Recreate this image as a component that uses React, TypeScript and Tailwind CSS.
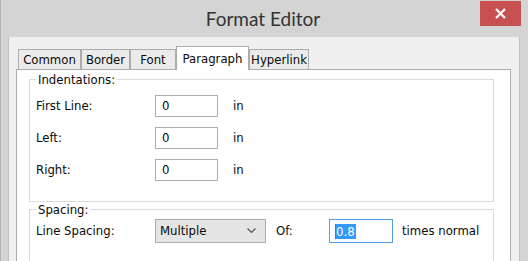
const tabs = [
  { name: "Common", w: "w-[63px]" },
  { name: "Border", w: "w-[49px]" },
  { name: "Font", w: "w-[46px]" },
  { name: "Paragraph", w: "w-[73px]", active: true },
  { name: "Hyperlink", w: "w-[60px]" },
];

const indents = ["First Line:", "Left:", "Right:"];

const Field = ({ value }: { value: string }) => (
  <div className="flex h-[22px] w-[63px] items-center border border-[#abadb3] bg-white pl-[6px]">
    {value}
  </div>
);

const App = () => {
  return (
    <div className="flex h-[261px] w-[528px] flex-col overflow-hidden border-l border-[#b4b4b4] bg-[#d4d4d4] font-['DejaVu_Sans',sans-serif] text-[13px] font-stretch-condensed text-[#0a0a0a]">
      <div className="grid h-[37px] shrink-0 grid-cols-[1fr_auto_1fr]">
        <div />
        <div className="pt-[5px] pr-[3px] font-['Lato',sans-serif] text-[19px] text-[#333] font-stretch-normal">
          Format Editor
        </div>
        <div className="flex justify-end pt-[1px] pr-[7px]">
          <div className="flex h-[25px] w-[41px] items-center justify-center bg-[#c75050]">
            <svg width="11" height="11" viewBox="0 0 11 11">
              <path d="M1 1 L10 10 M10 1 L1 10" stroke="#fff" strokeWidth="2.2" />
            </svg>
          </div>
        </div>
      </div>

      <div className="mr-[8px] ml-[7px] flex flex-1 flex-col border-x border-[#c2c2c2] bg-[#f0f0f0] pt-[9px] pr-[8px] pl-[7px]">
        <div className="flex items-end pl-[2px]">
          {tabs.map((t) =>
            t.active ? (
              <div
                key={t.name}
                className={`${t.w} relative z-10 -mb-px flex h-[24px] items-start justify-center border border-b-0 border-[#acacac] bg-white pt-[2px]`}
              >
                {t.name}
              </div>
            ) : (
              <div
                key={t.name}
                className={`${t.w} flex h-[20px] items-center justify-center border border-b-0 border-[#acacac] bg-[#ebebeb]`}
              >
                {t.name}
              </div>
            )
          )}
        </div>

        <div className="flex-1 border border-[#acacac] bg-white pr-[16px] pl-[12px]">
          <fieldset className="border border-[#dcdcdc] px-[6px] pb-[20px]">
            <legend className="px-[2px]">Indentations:</legend>
            <div className="flex flex-col gap-[10px] pt-[5px]">
              {indents.map((l) => (
                <div key={l} className="flex items-center">
                  <div className="w-[119px]">{l}</div>
                  <Field value="0" />
                  <div className="pl-[15px]">in</div>
                </div>
              ))}
            </div>
          </fieldset>

          <fieldset className="-mt-[2px] border border-[#dcdcdc] px-[6px] pb-[40px]">
            <legend className="px-[2px]">Spacing:</legend>
            <div className="flex items-center">
              <div className="w-[119px]">Line Spacing:</div>
              <div className="flex h-[24px] w-[111px] items-center justify-between border border-[#acacac] bg-[#e5e5e5] pr-[9px] pl-[4px]">
                <span>Multiple</span>
                <svg width="9" height="6" viewBox="0 0 9 6">
                  <path d="M0.5 0.5 L4.5 4.5 L8.5 0.5" stroke="#555" strokeWidth="1.2" fill="none" />
                </svg>
              </div>
              <div className="w-[63px] pl-[10px]">Of:</div>
              <div className="flex h-[24px] w-[64px] items-center border border-[#569de5] bg-white pl-[5px]">
                <span className="h-[15px] w-px bg-[#b85a1a]" />
                <span className="bg-[#3399ff] pr-[1px] leading-[15px] text-white">0.8</span>
              </div>
              <div className="pl-[9px]">times normal</div>
            </div>
          </fieldset>
        </div>
      </div>
    </div>
  );
};

export default App;
